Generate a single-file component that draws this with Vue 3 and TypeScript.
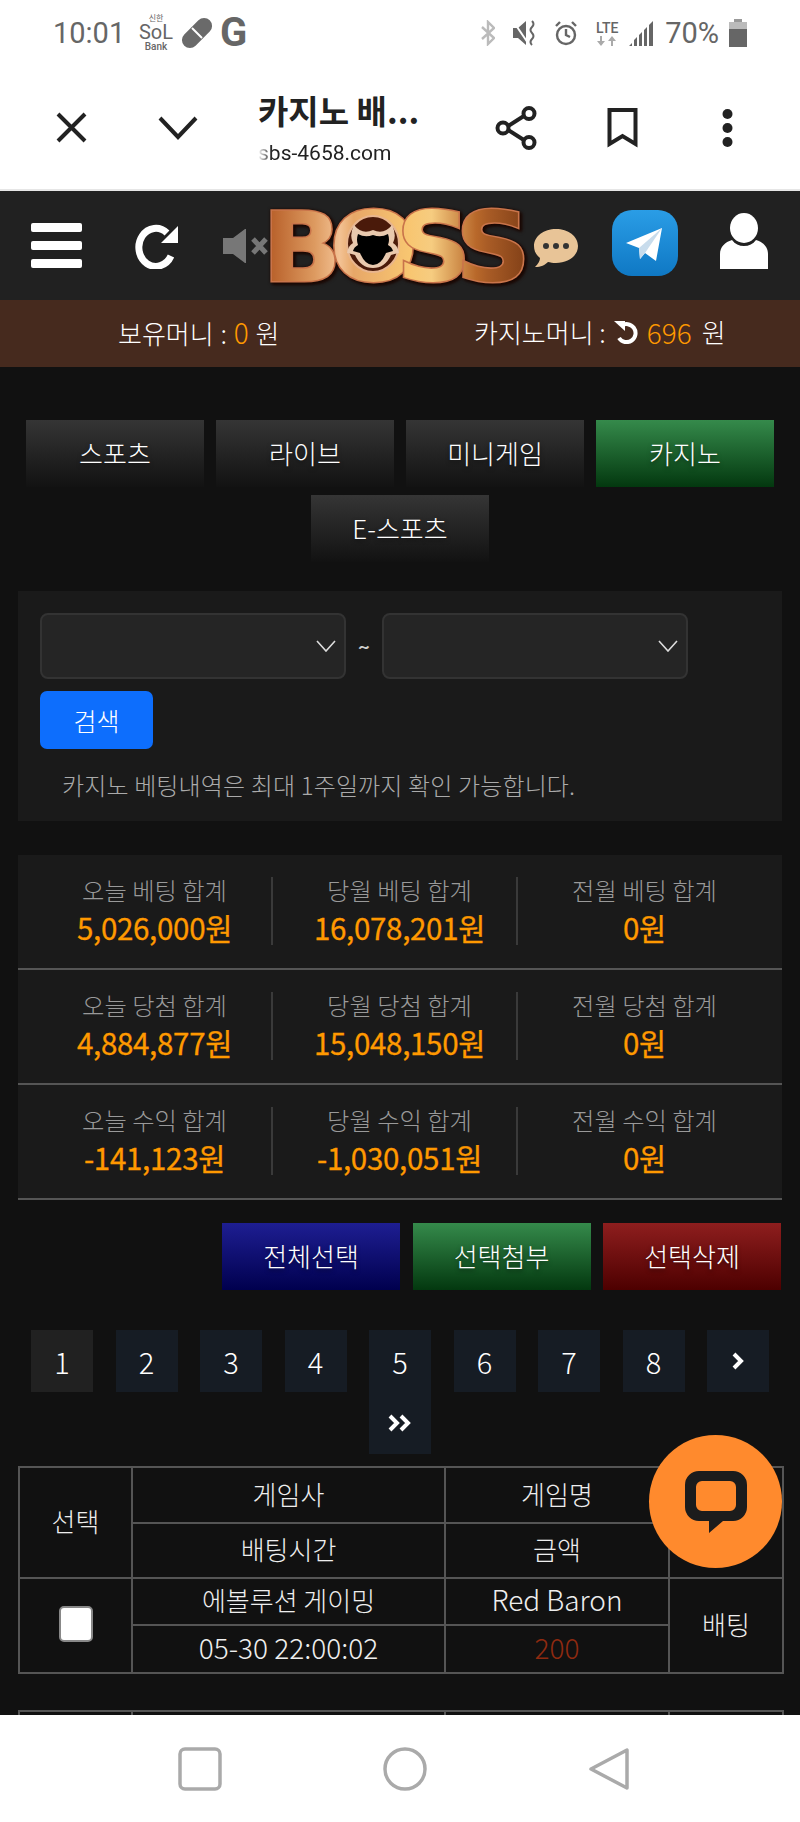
<script setup lang="ts">
interface StatCell {
    label: string
    value: string
}

const tabs = ['스포츠', '라이브', '미니게임', '카지노', 'E-스포츠']
const pages = ['1', '2', '3', '4', '5', '6', '7', '8']

const stats: StatCell[][] = [
    [
        { label: '오늘 베팅 합계', value: '5,026,000원' },
        { label: '당월 베팅 합계', value: '16,078,201원' },
        { label: '전월 베팅 합계', value: '0원' }
    ],
    [
        { label: '오늘 당첨 합계', value: '4,884,877원' },
        { label: '당월 당첨 합계', value: '15,048,150원' },
        { label: '전월 당첨 합계', value: '0원' }
    ],
    [
        { label: '오늘 수익 합계', value: '-141,123원' },
        { label: '당월 수익 합계', value: '-1,030,051원' },
        { label: '전월 수익 합계', value: '0원' }
    ]
]
</script>

<template>
    <div class="phone">
        <div class="status">
            <span class="clock">10:01</span>
            <div class="sol">
                <span class="sol-top">신한</span>
                <span class="sol-mid">SoL</span>
                <span class="sol-bot">Bank</span>
            </div>
            <svg class="pill" width="32" height="32" viewBox="0 0 32 32">
                <rect x="-2" y="8" width="36" height="16" rx="8" transform="rotate(-45 16 16)" fill="#6a6a6a" />
                <path d="M11 11l10 10" stroke="#fff" stroke-width="2" />
            </svg>
            <span class="g">G</span>
            <svg class="bt" width="14" height="26" viewBox="0 0 14 26" fill="none" stroke="#bbb" stroke-width="2.4">
                <path d="M1 7l12 11-6 6V2l6 6L1 19" />
            </svg>
            <svg class="mute" width="28" height="26" viewBox="0 0 28 26">
                <path d="M1 8h5l8-7v24l-8-7H1z" fill="#666" />
                <path d="M1 1l15 22" stroke="#fff" stroke-width="2" />
                <path d="M20 1q3 3 0 6t0 6 0 6 0 6" stroke="#666" stroke-width="2" fill="none" />
            </svg>
            <svg class="alarm" width="24" height="26" viewBox="0 0 24 26" fill="none" stroke="#666" stroke-width="2.4">
                <circle cx="12" cy="15" r="9" />
                <path d="M12 9v6l4 2M2 6l4-4M22 6l-4-4" />
            </svg>
            <div class="lte">
                <span>LTE</span>
                <svg width="20" height="10" viewBox="0 0 20 10" fill="#aaa">
                    <path d="M4 10L0 5h3V0h2v5h3zM15 0l4 5h-3v5h-2V5h-3z" />
                </svg>
            </div>
            <svg class="signal" width="27" height="26" viewBox="0 0 27 26" fill="#666">
                <path d="M0 26l3-3v3zM5 26v-6l3-3v9zM10 26V15l3-3v14zM15 26V10l3-3v19zM20 26V5l4-4v25z" />
            </svg>
            <span class="pct">70%</span>
            <svg class="batt" width="18" height="28" viewBox="0 0 18 28">
                <rect x="5" y="0" width="8" height="3" fill="#999" />
                <rect x="0" y="3" width="18" height="7" fill="#bbb" />
                <rect x="0" y="10" width="18" height="18" fill="#666" />
            </svg>
        </div>

        <div class="toolbar">
            <svg class="tb-x" width="31" height="31" viewBox="0 0 31 31" stroke="#222" stroke-width="4" fill="none">
                <path d="M2 2l27 27M29 2L2 29" />
            </svg>
            <svg class="tb-chev" width="40" height="24" viewBox="0 0 40 24" stroke="#222" stroke-width="4" fill="none">
                <path d="M2 2l18 19L38 2" />
            </svg>
            <div class="tb-title">
                <div class="tb-name">카지노 배...</div>
                <div class="tb-url">sbs-4658.com</div>
            </div>
            <svg class="tb-share" width="42" height="44" viewBox="0 0 42 44" stroke="#222" stroke-width="4" fill="none">
                <path d="M10 22L32 8M10 22l22 14" />
                <circle cx="8" cy="22" r="5.5" fill="#fff" />
                <circle cx="34" cy="7.5" r="5.5" fill="#fff" />
                <circle cx="34" cy="36.5" r="5.5" fill="#fff" />
            </svg>
            <svg class="tb-mark" width="31" height="40" viewBox="0 0 31 40" stroke="#222" stroke-width="4" fill="none">
                <path d="M2.5 2h26v34l-13-8-13 8z" />
            </svg>
            <svg class="tb-dots" width="11" height="40" viewBox="0 0 11 40" fill="#222">
                <circle cx="5.5" cy="6" r="5" />
                <circle cx="5.5" cy="20" r="5" />
                <circle cx="5.5" cy="34" r="5" />
            </svg>
        </div>

        <div class="site">
            <div class="head">
                <div class="burger"><i></i><i></i><i></i></div>
                <svg class="redo" width="44" height="46" viewBox="0 0 44 46" fill="none">
                    <path d="M32 10A17 19 0 1 0 36 33" stroke="#fff" stroke-width="7" />
                    <path d="M43 3v17H26z" fill="#fff" />
                </svg>
                <svg class="speaker" width="46" height="34" viewBox="0 0 46 34" fill="#777">
                    <path d="M0 9h10L22 0h1v34h-1L10 25H0z" />
                    <path d="M30 10l13 14M43 10L30 24" stroke="#777" stroke-width="5" />
                </svg>
                <svg class="logo" width="258" height="80" viewBox="0 0 258 80">
                    <defs>
                        <linearGradient id="logoFill" gradientUnits="userSpaceOnUse" x1="0" x2="258" y1="0" y2="0">
                            <stop offset="0" stop-color="#b8602a" />
                            <stop offset="0.16" stop-color="#dd9a60" />
                            <stop offset="0.25" stop-color="#f3c294" />
                            <stop offset="0.3" stop-color="#e7a768" />
                            <stop offset="0.5" stop-color="#f8c671" />
                            <stop offset="0.58" stop-color="#f6cc80" />
                            <stop offset="0.74" stop-color="#b8682a" />
                            <stop offset="0.78" stop-color="#a95c26" />
                            <stop offset="1" stop-color="#6b300f" />
                        </linearGradient>
                    </defs>
                    <text class="logo-text" transform="scale(1.08 1)" x="-7 55 117 172" y="74" fill="url(#logoFill)" stroke="#c9744a" stroke-width="3">BOSS</text>
                    <ellipse cx="103" cy="37" rx="26" ry="28" fill="#4a1a0a" stroke="#e8b58e" stroke-width="2" />
                    <path d="M84 18q8 10 19 5q11 5 19-5q5 10 1 18q5 3 6 10q-5 1-8 2q-6 13-18 13t-18-13q-3-1-8-2q1-7 6-10q-4-8 1-18z" fill="#e9c9ae" />
                    <path d="M88 27q7 4 15 1q8 3 15-1q2 6 0 11q4 2 5 6l-7 2q-5 12-13 12t-13-12l-7-2q1-4 5-6q-2-5 0-11z" fill="#000" />
                </svg>
                <svg class="talk" width="46" height="40" viewBox="0 0 46 40">
                    <path d="M23 1c12 0 22 7 22 17s-10 17-22 17c-3 0-6-.5-8-1-3 3-7 5-13 5 3-3 5-6 5-9C3 27 1 23 1 18 1 8 11 1 23 1z" fill="#e8c497" />
                    <circle cx="13" cy="18" r="3" fill="#333" />
                    <circle cx="23" cy="18" r="3" fill="#333" />
                    <circle cx="33" cy="18" r="3" fill="#333" />
                </svg>
                <svg class="tele" width="66" height="66" viewBox="0 0 66 66">
                    <defs>
                        <linearGradient id="teleFill" x1="0" x2="0" y1="0" y2="1">
                            <stop offset="0" stop-color="#2a9de6" />
                            <stop offset="1" stop-color="#0f78c4" />
                        </linearGradient>
                    </defs>
                    <rect width="66" height="66" rx="20" fill="url(#teleFill)" />
                    <path d="M14 33L50 18l-6 33-11-8-5 6-1-11z" fill="#fff" />
                    <path d="M27 38L50 18 33 43l-5 6z" fill="#c8dcec" />
                </svg>
                <svg class="user" width="48" height="56" viewBox="0 0 48 56" fill="#fff">
                    <ellipse cx="24" cy="15" rx="14" ry="15" />
                    <path d="M12 27c3 4 7 6 12 6s9-2 12-6c7 2 12 7 12 14v15H0V41c0-7 5-12 12-14z" />
                </svg>
            </div>

            <div class="money">
                <div class="money-own">보유머니 : <b>0</b> 원</div>
                <div class="money-casino">
                    카지노머니 :
                    <svg width="24" height="24" viewBox="0 0 24 24" fill="none">
                        <path d="M7 6a9 9 0 1 1-2 12" stroke="#fff" stroke-width="4" />
                        <path d="M0 1h11v10z" fill="#fff" />
                    </svg>
                    <b>696</b>
                    <span class="won">원</span>
                </div>
            </div>

            <div class="tabs">
                <div v-for="t in tabs" :key="t" class="btn" :class="{ green: t === '카지노' }">{{ t }}</div>
            </div>

            <div class="search">
                <div class="range">
                    <div class="select">
                        <svg width="20" height="12" viewBox="0 0 20 12" fill="none" stroke="#ddd" stroke-width="1.6"><path d="M1 1l9 10 9-10" /></svg>
                    </div>
                    <span class="tilde">~</span>
                    <div class="select">
                        <svg width="20" height="12" viewBox="0 0 20 12" fill="none" stroke="#ddd" stroke-width="1.6"><path d="M1 1l9 10 9-10" /></svg>
                    </div>
                </div>
                <div class="search-btn">검색</div>
                <div class="note">카지노 베팅내역은 최대 1주일까지 확인 가능합니다.</div>
            </div>

            <div class="stats">
                <div v-for="(row, i) in stats" :key="i" class="stat-row">
                    <div v-for="cell in row" :key="cell.label" class="stat-cell">
                        <div class="stat-label">{{ cell.label }}</div>
                        <div class="stat-value">{{ cell.value }}</div>
                    </div>
                </div>
            </div>

            <div class="actions">
                <div class="btn blue">전체선택</div>
                <div class="btn green">선택첨부</div>
                <div class="btn red">선택삭제</div>
            </div>

            <div class="pager">
                <div v-for="p in pages" :key="p" class="page" :class="{ active: p === '1' }">{{ p }}</div>
                <div class="page">
                    <svg width="12" height="18" viewBox="0 0 12 18" fill="none" stroke="#fff" stroke-width="4"><path d="M2 2l7 7-7 7" /></svg>
                </div>
                <div class="page">
                    <svg width="24" height="18" viewBox="0 0 24 18" fill="none" stroke="#fff" stroke-width="4"><path d="M2 2l7 7-7 7M13 2l7 7-7 7" /></svg>
                </div>
            </div>

            <table class="bets">
                <colgroup>
                    <col class="c1" />
                    <col class="c2" />
                    <col class="c3" />
                    <col class="c4" />
                </colgroup>
                <tbody>
                    <tr class="r1">
                        <td rowspan="2">선택</td>
                        <td>게임사</td>
                        <td>게임명</td>
                        <td rowspan="2"></td>
                    </tr>
                    <tr class="r2">
                        <td>배팅시간</td>
                        <td>금액</td>
                    </tr>
                    <tr class="r3">
                        <td rowspan="2"><span class="check"></span></td>
                        <td>에볼루션 게이밍</td>
                        <td class="latin">Red Baron</td>
                        <td rowspan="2">배팅</td>
                    </tr>
                    <tr class="r4">
                        <td class="latin">05-30 22:00:02</td>
                        <td class="latin amount">200</td>
                    </tr>
                </tbody>
            </table>

            <table class="bets next">
                <colgroup>
                    <col class="c1" />
                    <col class="c2" />
                    <col class="c3" />
                    <col class="c4" />
                </colgroup>
                <tbody>
                    <tr class="r1">
                        <td></td>
                        <td></td>
                        <td></td>
                        <td></td>
                    </tr>
                </tbody>
            </table>

            <div class="chat">
                <svg width="62" height="62" viewBox="0 0 62 62">
                    <path fill="#1c1c1c" fill-rule="evenodd" d="M14 0h34a14 14 0 0 1 14 14v22a14 14 0 0 1-14 14H38L24 62V50H14A14 14 0 0 1 0 36V14A14 14 0 0 1 14 0zM17 10a6 6 0 0 0-6 6v18a6 6 0 0 0 6 6h28a6 6 0 0 0 6-6V16a6 6 0 0 0-6-6z" />
                </svg>
            </div>
        </div>

        <div class="nav">
            <svg width="44" height="44" viewBox="0 0 44 44" fill="none" stroke="#aaa" stroke-width="3.5"><rect x="2" y="2" width="40" height="40" rx="5" /></svg>
            <svg width="44" height="44" viewBox="0 0 44 44" fill="none" stroke="#aaa" stroke-width="3.5"><circle cx="22" cy="22" r="20" /></svg>
            <svg width="42" height="44" viewBox="0 0 42 44" fill="none" stroke="#aaa" stroke-width="3.5" stroke-linejoin="round"><path d="M39 3v38L3 22z" /></svg>
        </div>
    </div>
</template>

<style scoped>
.phone
{
    width: 800px;
    height: 1822px;
    display: flex;
    flex-direction: column;
    overflow: hidden;
    background: #fff;
    font-family: "Noto Sans CJK KR", "Noto Sans", sans-serif;
}

.status
{
    height: 66px;
    flex-shrink: 0;
    display: flex;
    align-items: center;
    padding-left: 53px;
    color: #666;
}

.clock
{
    font-family: Roboto, sans-serif;
    font-size: 29px;
    width: 85px;
}

.sol
{
    width: 36px;
    display: flex;
    flex-direction: column;
    align-items: center;
    font-family: Roboto, sans-serif;
    line-height: 1;
    color: #666;
}

.sol-top { font-size: 8px; font-family: "Noto Sans CJK KR", sans-serif; }
.sol-mid { font-size: 20px; }
.sol-bot { font-size: 10px; font-weight: 500; }

.pill { margin-left: 7px; }

.g
{
    margin-left: 7px;
    font-family: Roboto, sans-serif;
    font-size: 40px;
    font-weight: 700;
    line-height: 40px;
}

.bt { margin-left: 234px; }
.mute { margin-left: 17px; }
.alarm { margin-left: 14px; }

.lte
{
    width: 26px;
    margin-left: 16px;
    display: flex;
    flex-direction: column;
    align-items: center;
    font-family: Roboto, sans-serif;
    font-size: 14px;
    font-weight: 500;
    line-height: 15px;
}

.signal { margin-left: 9px; }

.pct
{
    margin-left: 9px;
    font-family: Roboto, sans-serif;
    font-size: 29px;
}

.batt { margin-left: 10px; }

.toolbar
{
    height: 123px;
    flex-shrink: 0;
    display: flex;
    align-items: center;
    padding-left: 56px;
    border-bottom: 2px solid #e6e6e6;
}

.tb-chev { margin-left: 71px; }

.tb-title
{
    width: 162px;
    margin-left: 60px;
    color: #222;
}

.tb-name
{
    font-size: 33px;
    font-weight: 700;
    line-height: 40px;
    white-space: nowrap;
}

.tb-url
{
    margin-top: 10px;
    font-family: Roboto, sans-serif;
    font-size: 21px;
    line-height: 26px;
    -webkit-mask-image: linear-gradient(to right, transparent 0, #000 14px);
    mask-image: linear-gradient(to right, transparent 0, #000 14px);
}

.tb-share { margin-left: 75px; }
.tb-mark { margin-left: 70px; }
.tb-dots { margin-left: 84px; }

.site
{
    position: relative;
    flex: 1;
    min-height: 0;
    overflow: hidden;
    background: #111;
    color: #fff;
    font-weight: 300;
}

.head
{
    height: 109px;
    display: flex;
    align-items: center;
    background: #212121;
    padding-left: 31px;
}

.burger
{
    width: 51px;
    height: 45px;
    display: flex;
    flex-direction: column;
    justify-content: space-between;
}

.burger i
{
    display: block;
    height: 9px;
    border-radius: 2px;
    background: #fff;
}

.redo { margin-left: 53px; }
.speaker { margin-left: 44px; }
.logo { margin-left: 1px; margin-top: 3px; overflow: visible; }
.talk { margin-left: 5px; margin-top: 4px; }
.tele { margin-left: 33px; margin-bottom: 6px; }
.user { margin-left: 42px; margin-top: -10px; }

.logo-text
{
    font-family: "DejaVu Sans", sans-serif;
    font-size: 96px;
    font-weight: 700;
    paint-order: stroke;
    filter: drop-shadow(0 0 1.5px #1a0703) drop-shadow(2px 2px 1px #1a0703);
}

.money
{
    height: 67px;
    box-sizing: border-box;
    display: flex;
    align-items: center;
    background: #462a1e;
    font-size: 26px;
    padding: 0 0 4px 118px;
}

.money b
{
    font-weight: 300;
    font-size: 28px;
    color: #ff9900;
}

.money-own
{
    width: 356px;
    word-spacing: 1px;
}

.money-casino
{
    display: flex;
    align-items: center;
    gap: 8px;
}

.money-casino svg { margin-right: 1px; }
.money-casino .won { margin-left: 2px; }

.tabs
{
    margin: 53px 18px 0;
    display: flex;
    flex-wrap: wrap;
    justify-content: center;
    gap: 8px 12px;
}

.btn
{
    width: 178px;
    height: 67px;
    box-sizing: border-box;
    padding-bottom: 2px;
    display: flex;
    align-items: center;
    justify-content: center;
    font-size: 26px;
    background: linear-gradient(#353535, #121212);
    text-shadow: 0 2px 4px rgba(0, 0, 0, 0.5);
}

.btn.green { background: linear-gradient(#358a4b, #03380f); }
.btn.blue { background: linear-gradient(#1e1e92, #00004e); }
.btn.red { background: linear-gradient(#8e1e1e, #4d0000); }

.search
{
    margin: 29px 18px 0;
    padding: 22px 22px 16px;
    background: #1a1a1a;
}

.range
{
    display: flex;
    align-items: center;
}

.select
{
    width: 306px;
    height: 66px;
    box-sizing: border-box;
    display: flex;
    align-items: center;
    justify-content: flex-end;
    padding-right: 8px;
    background: #252525;
    border: 2px solid #333;
    border-radius: 8px;
}

.tilde
{
    width: 36px;
    text-align: center;
    font-size: 20px;
    font-weight: 700;
    color: #ccc;
}

.search-btn
{
    width: 113px;
    height: 58px;
    margin-top: 12px;
    display: flex;
    align-items: center;
    justify-content: center;
    border-radius: 7px;
    background: #0d6efd;
    font-size: 25px;
}

.note
{
    margin: 16px 0 0 22px;
    line-height: 40px;
    font-size: 24px;
    letter-spacing: 0.15px;
    color: #aaa;
    white-space: nowrap;
}

.stats
{
    margin: 34px 18px 0;
    background: #1a1a1a;
}

.stat-row
{
    height: 115px;
    box-sizing: border-box;
    padding: 22px 15px 0 14px;
    display: grid;
    grid-template-columns: repeat(3, 245px);
    border-bottom: 2px solid #555;
}

.stat-cell
{
    position: relative;
    height: 68px;
    text-align: center;
}

.stat-cell:not(:last-child)::after
{
    content: "";
    position: absolute;
    top: 0;
    right: 4px;
    width: 2px;
    height: 68px;
    background: #3a3a3a;
}

.stat-label
{
    font-size: 24.3px;
    line-height: 26px;
    color: #999;
}

.stat-value
{
    margin-top: 3px;
    font-size: 29.5px;
    font-weight: 400;
    line-height: 42px;
    color: #ff9900;
    letter-spacing: -0.3px;
    -webkit-text-stroke: 0.3px #ff9900;
}

.actions
{
    margin: 23px 19px 0 0;
    display: flex;
    justify-content: flex-end;
    gap: 12.5px;
}

.pager
{
    margin: 40px 18px 0;
    display: flex;
    flex-wrap: wrap;
    justify-content: center;
    column-gap: 22.5px;
}

.page
{
    width: 62px;
    height: 62px;
    display: flex;
    align-items: center;
    justify-content: center;
    background: #161c24;
    font-size: 29px;
}

.page.active { background: #212121; }

.bets
{
    width: 764px;
    margin: 12px 18px 0;
    table-layout: fixed;
    border-collapse: collapse;
    font-size: 26px;
    color: #eee;
}

.bets.next { margin-top: 36px; }

.bets td
{
    padding: 0 0 3px;
    border: 2px solid #555;
    text-align: center;
    line-height: 1.2;
}

.bets td.latin { font-size: 28px; }

.c1 { width: 113px; }
.c2 { width: 313px; }
.c3 { width: 224px; }
.c4 { width: 114px; }

.r1 { height: 56px; }
.r2 { height: 55px; }
.r3 { height: 47px; }
.r4 { height: 48px; }

.check
{
    display: block;
    width: 34px;
    height: 36px;
    margin: 0 auto;
    box-sizing: border-box;
    background: #fff;
    border: 2px solid #888;
    border-radius: 5px;
}

.bets td.amount { color: #8f2a10; }

.chat
{
    position: absolute;
    left: 649px;
    top: 1244px;
    width: 133px;
    height: 133px;
    display: flex;
    align-items: center;
    justify-content: center;
    border-radius: 50%;
    background: #ff8a2d;
}

.nav
{
    height: 107px;
    box-sizing: border-box;
    flex-shrink: 0;
    display: flex;
    align-items: flex-start;
    padding: 32px 0 0 178px;
    gap: 161px;
    background: #fff;
}
</style>
